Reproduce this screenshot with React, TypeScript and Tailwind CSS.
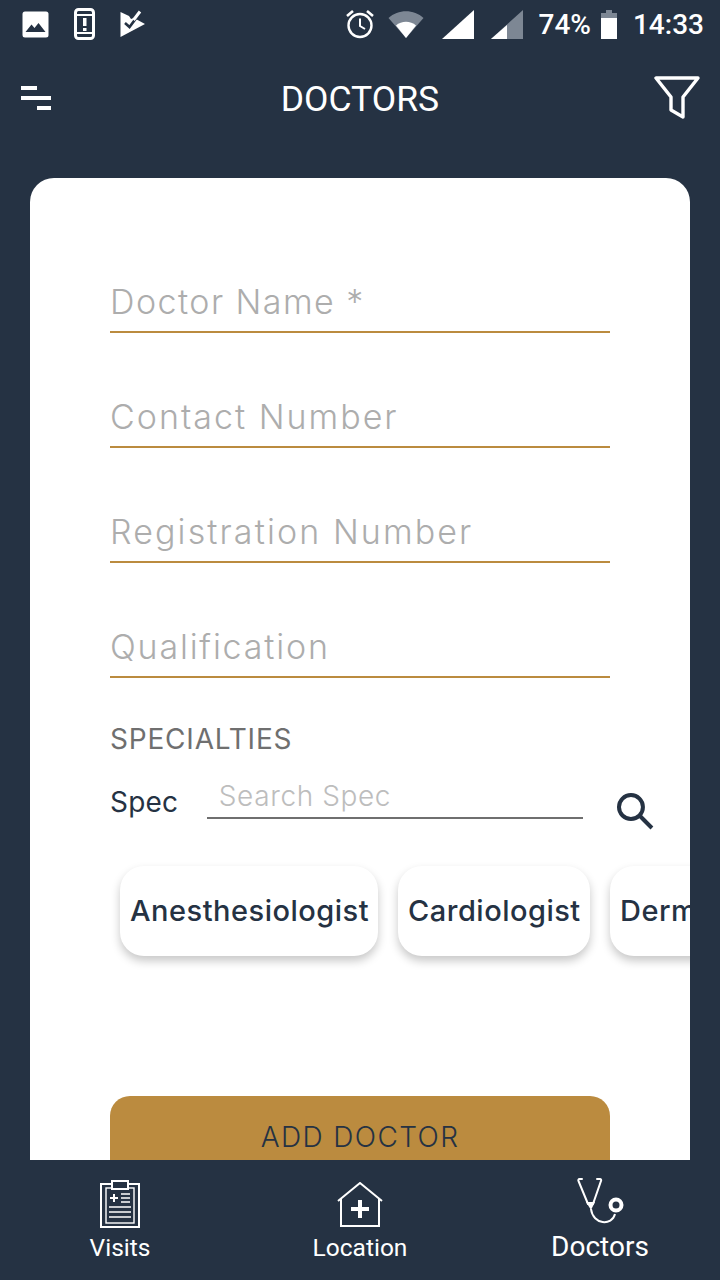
function Field({ label, tracking }: { label: string; tracking: string }) {
  return (
    <div className="h-[115px] flex flex-col justify-end">
      <div className={`h-[50px] border-b-2 border-[#bb8b3f] text-[34px] leading-[38px] ${tracking} text-[#adadad] font-['Inter',sans-serif] font-light whitespace-nowrap`}>
        {label}
      </div>
    </div>
  );
}

function Chip({ label, width }: { label: string; width: string }) {
  return (
    <div className={`${width} shrink-0 h-[90px] rounded-[24px] bg-white shadow-[0_5px_10px_rgba(0,0,0,0.22)] flex items-center pl-[10px] text-[29px] tracking-[0.5px] text-[#253243] font-['Inter',sans-serif] font-[450] whitespace-nowrap overflow-hidden`}>
      {label}
    </div>
  );
}

function StatusBar() {
  return (
    <div className="h-[48px] pt-[2px] flex items-center justify-between pl-[22px] pr-[16px] text-white font-['Roboto',sans-serif] font-medium text-[28px]">
      <div className="flex items-center gap-[25px] mb-[2px]">
        <svg width="27" height="27" viewBox="0 0 27 27">
          <rect x="0.5" y="0.5" width="26" height="26" rx="2.5" fill="#fff" />
          <path d="M3.5 21 L9.5 13.5 L12.5 17 L16.5 12 L23.5 21 Z" fill="#253243" />
        </svg>
        <svg width="21" height="32" viewBox="0 0 21 32">
          <rect x="1.5" y="1.5" width="18" height="29" rx="3" fill="none" stroke="#fff" strokeWidth="3" />
          <rect x="1.5" y="6" width="18" height="2" fill="#fff" />
          <rect x="1.5" y="24" width="18" height="2" fill="#fff" />
          <rect x="9" y="10" width="3.5" height="8" fill="#fff" />
          <rect x="9" y="20" width="3.5" height="3" fill="#fff" />
        </svg>
        <svg width="26" height="28" viewBox="0 0 26 28">
          <path d="M0.5 2 L9 6 L11 9 L14 8 L25 14 L0.5 27 Z" fill="#fff" />
          <path d="M5 13 L9.5 17 L20 3" fill="none" stroke="#253243" strokeWidth="2.6" />
          <path d="M13.5 10 L20 1.5" fill="none" stroke="#fff" strokeWidth="3" />
        </svg>
      </div>
      <div className="flex items-center">
        <svg width="30" height="30" viewBox="0 0 30 30" className="mr-[13px] mb-[2px]">
          <circle cx="15" cy="16.5" r="11.5" fill="none" stroke="#fff" strokeWidth="2.4" />
          <path d="M15 9.5 V17 L20 20" fill="none" stroke="#fff" strokeWidth="2" />
          <path d="M2 7 L8 2 M28 7 L22 2" stroke="#fff" strokeWidth="2.6" />
        </svg>
        <svg width="36" height="28" viewBox="0 0 36 28" className="mr-[18px] mb-[2px]">
          <path d="M0.5 8 C 10 -1, 26 -1, 35.5 8 L18 28 Z" fill="#7d8794" />
          <path d="M8 15.5 C 13.5 10.5, 22.5 10.5, 28 15.5 L18 28 Z" fill="#fff" />
        </svg>
        <svg width="32" height="29" viewBox="0 0 32 29" className="mr-[17px] mb-[2px]">
          <path d="M0 29 L32 0 V29 Z" fill="#fff" />
        </svg>
        <svg width="32" height="29" viewBox="0 0 32 29" className="mr-[16px] mb-[2px]">
          <path d="M0 29 L32 0 V29 Z" fill="#7d8794" />
          <path d="M0 29 L16 15 V29 Z" fill="#fff" />
        </svg>
        <span className="leading-none">74%</span>
        <svg width="16" height="29" viewBox="0 0 16 29" className="ml-[10px] mr-[16px] mb-[2px]">
          <path d="M5 0 H11 V3 H16 V8 H0 V3 H5 Z" fill="#7d8794" />
          <rect x="0" y="8" width="16" height="21" fill="#fff" />
        </svg>
        <span className="leading-none">14:33</span>
      </div>
    </div>
  );
}

function Header() {
  return (
    <div className="h-[130px] pt-[22px] pl-[20px] pr-[20px] flex items-start justify-between text-white">
      <svg width="32" height="26" viewBox="0 0 32 26" className="mt-[15px]">
        <rect x="1" y="1" width="16" height="4" fill="#fff" />
        <rect x="1" y="11" width="30" height="4" fill="#fff" />
        <rect x="17" y="21" width="14" height="4" fill="#fff" />
      </svg>
      <div className="text-[35.5px] leading-[58px] font-['Roboto',sans-serif] h-[60px] ml-[14px]">DOCTORS</div>
      <svg width="46" height="44" viewBox="0 0 46 44" className="mt-[6px]">
        <path d="M2 2 H44 L29 21 V41 L17 34 V21 Z" fill="none" stroke="#fff" strokeWidth="3.4" strokeLinejoin="round" />
      </svg>
    </div>
  );
}

function NavItem({ icon, label, className }: { icon: React.ReactNode; label: string; className?: string }) {
  return (
    <div className="flex-1 flex flex-col items-center">
      <div className="h-[68px] flex items-end justify-center">{icon}</div>
      <div className={`font-['Roboto',sans-serif] text-white ${className ?? "text-[24.5px] leading-[40px]"}`}>{label}</div>
    </div>
  );
}

export default function App() {
  return (
    <div className="w-[720px] h-[1280px] overflow-hidden bg-[#253243] flex flex-col">
      <StatusBar />
      <Header />
      <main className="flex-1 min-h-0 mx-[30px] rounded-t-[24px] bg-white overflow-hidden">
        <div className="pl-[80px] pr-[80px] pt-[40px]">
          <Field label="Doctor Name *" tracking="tracking-[1.45px]" />
          <Field label="Contact Number" tracking="tracking-[2px]" />
          <Field label="Registration Number" tracking="tracking-[2.1px]" />
          <Field label="Qualification" tracking="tracking-[1.8px]" />
        </div>
        <div className="pl-[80px] pt-[44px] text-[28px] leading-[34px] text-[#6f6f6f] font-['Inter',sans-serif] tracking-[0.8px]">
          SPECIALTIES
        </div>
        <div className="pl-[80px] pr-[36px] pt-[14px] flex items-start">
          <div className="w-[97px] pt-[12px] text-[28px] leading-[40px] tracking-[0.2px] text-[#253243] font-['Inter',sans-serif]">Spec</div>
          <div className="w-[377px] h-[49px] border-b-2 border-[#6f6f6f] pl-[12px] pt-[4px] text-[28px] leading-[44px] tracking-[0.6px] text-[#bdbdbd] font-['Inter',sans-serif] font-light">
            Search Spec
          </div>
          <svg width="38" height="38" viewBox="0 0 38 38" className="ml-[33px] mt-[22px]">
            <circle cx="15" cy="15" r="12" fill="none" stroke="#253243" strokeWidth="4" />
            <path d="M24 24 L36 36" stroke="#253243" strokeWidth="4" />
          </svg>
        </div>
        <div className="flex gap-[20px] pl-[90px] pt-[36px] pb-[20px] overflow-hidden">
          <Chip label="Anesthesiologist" width="w-[258px]" />
          <Chip label="Cardiologist" width="w-[192px]" />
          <Chip label="Derm" width="w-[200px]" />
        </div>
        <div className="mt-[120px] mx-[80px] h-[64px] rounded-t-[20px] bg-[#bb8b3f] text-center text-[28px] leading-[82px] tracking-[1.4px] text-[#253243] font-['Inter',sans-serif] font-light">
          ADD DOCTOR
        </div>
      </main>
      <nav className="h-[120px] shrink-0 flex">
        <NavItem
          label="Visits"
          icon={
            <svg width="40" height="48" viewBox="0 0 40 48">
              <rect x="1" y="4" width="38" height="43" fill="none" stroke="#fff" strokeWidth="2" />
              <rect x="6" y="8" width="28" height="35" fill="none" stroke="#fff" strokeWidth="1.4" />
              <rect x="12" y="1" width="16" height="8" fill="#253243" stroke="#fff" strokeWidth="2" />
              <path d="M10 18 H18 M14 14 V22" stroke="#fff" strokeWidth="2" />
              <path d="M21 14 H30 M21 18 H30 M21 22 H30 M9 27 H31 M9 32 H31 M9 37 H31" stroke="#fff" strokeWidth="1.4" />
            </svg>
          }
        />
        <NavItem
          label="Location"
          icon={
            <svg width="46" height="46" viewBox="0 0 46 46">
              <path d="M1 19 L23 1 L45 19" fill="none" stroke="#fff" strokeWidth="2" />
              <path d="M4 17 V44 H42 V17" fill="none" stroke="#fff" strokeWidth="2" />
              <path d="M23 18 V36 M14 27 H32" stroke="#fff" strokeWidth="4" />
            </svg>
          }
        />
        <NavItem
          label="Doctors"
          className="text-[28px] leading-[38px]"
          icon={
            <svg width="48" height="52" viewBox="0 0 48 52">
              <path d="M6 3 H3.5 C2.5 3 2 4 2.5 5 L12 28 M21 3 H24 C25 3 25.5 4 25 5 L17 28" fill="none" stroke="#fff" strokeWidth="2" strokeLinecap="round" />
              <path d="M10 26 H19 L15 34 Z" fill="#fff" />
              <path d="M15 33 C 17 49, 36 50, 39 38" fill="none" stroke="#fff" strokeWidth="2" />
              <circle cx="40" cy="29" r="5.5" fill="none" stroke="#fff" strokeWidth="4" />
            </svg>
          }
        />
      </nav>
    </div>
  );
}
